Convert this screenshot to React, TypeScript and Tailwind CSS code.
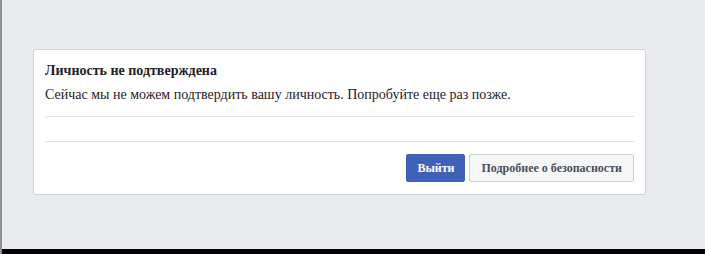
export default function App() {
  return (
    <div
      className="w-[705px] h-[254px] bg-[#e9ebee] flex flex-col border-l-2 border-[#8e9096] overflow-hidden"
      style={{ fontFamily: '"Liberation Serif", "Times New Roman", serif' }}
    >
      <div className="flex-1">
        <div className="ml-[31px] mt-[49px] w-[613px] bg-white border border-[#cdd0d5] rounded-[3px] px-[11px] pt-[12px] pb-[12px]">
          <div className="text-[14px] leading-[18px] font-bold text-[#1d2129]">Личность не подтверждена</div>
          <div className="mt-[6px] text-[14px] leading-[18px] text-[#1d2129]">
            Сейчас мы не можем подтвердить вашу личность. Попробуйте еще раз позже.
          </div>
          <div className="mt-[12px] h-px bg-[#dddfe2]" />
          <div className="h-[24px]" />
          <div className="h-px bg-[#dddfe2]" />
          <div className="mt-[12px] flex justify-end gap-[4px]">
            <button className="h-[28px] px-[10px] rounded-[2px] bg-[#4161b8] border border-[#4161b8] text-white text-[12px] font-bold">
              Выйти
            </button>
            <button className="h-[28px] px-[11px] rounded-[2px] bg-[#f5f6f7] border border-[#ccd0d5] text-[#4b4f56] text-[12px] font-bold">
              Подробнее о безопасности
            </button>
          </div>
        </div>
      </div>
      <div className="h-[5px] bg-black" />
    </div>
  );
}
